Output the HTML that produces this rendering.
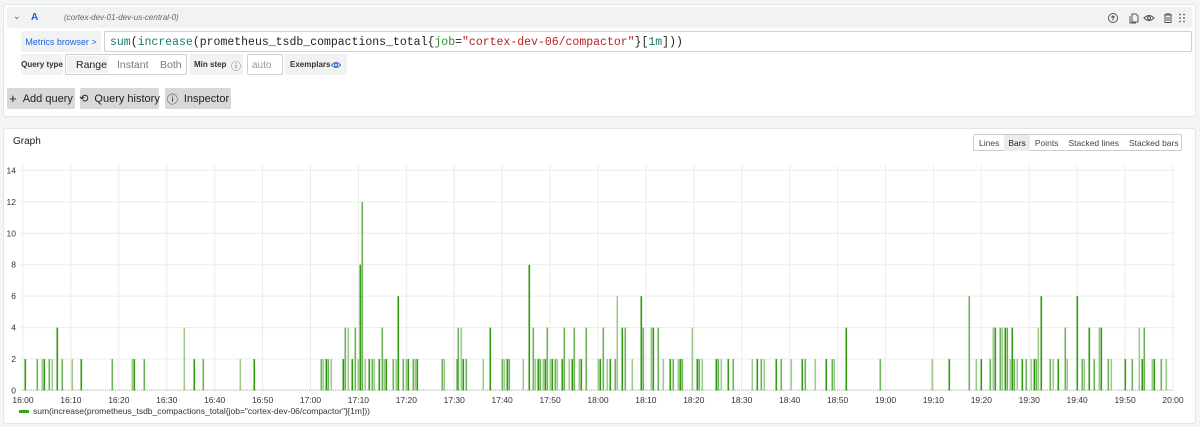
<!DOCTYPE html>
<html><head><meta charset="utf-8"><style>
*{box-sizing:border-box;margin:0;padding:0}
body{width:1200px;height:427px;background:#f4f5f5;font-family:"Liberation Sans",sans-serif;font-size:11px;color:#24292e;position:relative;overflow:hidden}
.card{position:absolute;background:#fff;border:1px solid #e4e4e4;border-radius:3px}
.abs{position:absolute;white-space:nowrap}
.hdr{position:absolute;left:7px;top:7px;width:1185px;height:21px;background:#f1f2f2;border-radius:2px}
.lbl{position:absolute;background:#f1f2f2;font-size:8px;font-weight:bold;color:#333;display:flex;align-items:center;justify-content:center;border-radius:2px;white-space:nowrap}
.btn{position:absolute;top:88px;height:21px;background:#d8d8d8;border-radius:2px;font-size:11px;color:#222;display:flex;align-items:center;justify-content:center;gap:6px;white-space:nowrap}
.mono{font-family:"Liberation Mono",monospace}
</style></head><body>
<div class="card" style="left:3px;top:4px;width:1193px;height:113px"></div>
<div class="hdr"></div>
<div class="abs" style="left:13px;top:11px;font-size:9px;color:#555">⌄</div>
<div class="abs" style="left:31px;top:12px;font-size:10px;color:#1f62e0;font-weight:bold">A</div>
<div class="abs" style="left:64px;top:13px;font-size:8px;color:#666;font-style:italic">(cortex-dev-01-dev-us-central-0)</div>
<svg class="abs" style="left:1107px;top:11px" width="90" height="14" viewBox="0 0 90 14" fill="none" stroke="#555" stroke-width="1">
<circle cx="6" cy="7" r="4.5"/><path d="M6 9.5V5M4.3 6.5L6 4.8 7.7 6.5"/>
<path d="M25 3h4l2 2v6h-6zM23 5v7h6"/>
<circle cx="42" cy="7" r="1.5"/><path d="M37 7q5-5 10 0q-5 5-10 0z"/>
<path d="M57 4h8M59 4V3h4v1M58 4.5v7h6v-7M60 6v4M62 6v4"/>
<g fill="#555" stroke="none"><circle cx="73" cy="3.5" r=".9"/><circle cx="77" cy="3.5" r=".9"/><circle cx="73" cy="7" r=".9"/><circle cx="77" cy="7" r=".9"/><circle cx="73" cy="10.5" r=".9"/><circle cx="77" cy="10.5" r=".9"/></g>
</svg>
<div class="lbl" style="left:21px;top:31px;width:80px;height:21px;color:#1f62e0;font-weight:normal;font-size:9px">Metrics browser &gt;</div>
<div class="abs mono" style="left:104px;top:31px;width:1088px;height:21px;border:1px solid #d0d0d0;border-radius:2px;padding:4px 0 0 5px;font-size:11.5px;color:#222"><span style="color:#1b7a6e">sum</span>(<span style="color:#1b7a6e">increase</span>(prometheus_tsdb_compactions_total{<span style="color:#2b8f2b">job</span>=<span style="color:#b22222">"cortex-dev-06/compactor"</span>}[<span style="color:#1b7a6e">1m</span>]))</div>
<div class="lbl" style="left:21px;top:54px;width:42px;height:21px">Query type</div>
<div class="abs" style="left:65px;top:54px;width:122px;height:21px;border:1px solid #d0d0d0;border-radius:2px"></div>
<div class="abs" style="left:67px;top:56px;width:41px;height:17px;background:#f1f2f2"></div>
<div class="abs" style="left:76px;top:59px;font-size:10.5px;color:#222">Range</div>
<div class="abs" style="left:117px;top:59px;font-size:10.5px;color:#777">Instant</div>
<div class="abs" style="left:160px;top:59px;font-size:10.5px;color:#777">Both</div>
<div class="lbl" style="left:190px;top:54px;width:53px;height:21px;justify-content:flex-start;padding-left:4px">Min step</div>
<div class="abs" style="left:231px;top:58px;font-size:10px;color:#666">ⓘ</div>
<div class="abs" style="left:247px;top:54px;width:36px;height:21px;border:1px solid #d0d0d0;border-radius:2px;padding:5px 0 0 4px;color:#999;font-size:10px">auto</div>
<div class="lbl" style="left:285px;top:54px;width:62px;height:21px;justify-content:flex-start;padding-left:5px">Exemplars</div>
<svg class="abs" style="left:331px;top:60px" width="10" height="10" viewBox="0 0 10 10" fill="none" stroke="#3d71d9" stroke-width="1"><path d="M0.5 5q4.5-5 9 0q-4.5 5-9 0z"/><circle cx="5" cy="5" r="1.5"/></svg>
<div class="btn" style="left:7px;width:68px"><span style="font-size:13px">+</span>Add query</div>
<div class="btn" style="left:80px;width:79px"><span style="font-size:11px">⟲</span>Query history</div>
<div class="btn" style="left:165px;width:66px"><span style="font-size:11px">ⓘ</span>Inspector</div>

<div class="card" style="left:3px;top:128px;width:1193px;height:296px"></div>
<div class="abs" style="left:13px;top:136px;font-size:10px;color:#222">Graph</div>
<div class="abs" style="left:973px;top:134px;width:209px;height:17px;border:1px solid #ccc;border-radius:2px;font-size:8.5px;color:#444;display:flex;align-items:center">
<span style="padding:0 5px">Lines</span><span style="padding:3px 4px;background:#ececec;color:#222">Bars</span><span style="padding:0 5px">Points</span><span style="padding:0 5px">Stacked lines</span><span style="padding:0 5px">Stacked bars</span></div>
<svg id="ch" class="abs" style="left:0;top:0" width="1200" height="427"></svg>
<div class="abs" style="left:19px;top:410px;width:10px;height:3px;background:#37a315"></div>
<div class="abs" style="left:33px;top:406px;font-size:8.5px;color:#333">sum(increase(prometheus_tsdb_compactions_total{job="cortex-dev-06/compactor"}[1m]))</div>
<script>
var s='',x0=23,x1=1173,y0=390.5,u=15.72;
for(var k=0;k<=24;k++){var x=x0+k*(x1-x0)/24;s+='<line x1="'+x+'" y1="165" x2="'+x+'" y2="391" stroke="#ececec"/>';
var h=16+Math.floor(k/6),m=(k%6)*10;s+='<text x="'+x+'" y="403" font-size="8.5" fill="#333" text-anchor="middle" font-family="Liberation Sans">'+h+':'+(m<10?'0':'')+m+'</text>';}
for(var v=0;v<=14;v+=2){var y=y0-v*u;s+='<line x1="20" y1="'+y+'" x2="1175" y2="'+y+'" stroke="#ececec"/><text x="16" y="'+(y+3)+'" font-size="8.5" fill="#333" text-anchor="end" font-family="Liberation Sans">'+v+'</text>';}
s+='<line x1="23" y1="390" x2="1173" y2="390" stroke="#9fcf8f" stroke-dasharray="1 1"/>';
var b=[[25,2],[37,2],[42,2],[44,2],[49,2],[52,2],[57,4],[62,2],[72,2],[81,2],[112,2],[132,2],[134,2],[144,2],[184,4],[194,2],[203,2],[240,2],[254,2],
[321,2],[323,2],[326,2],[328,2],[331,2],[343,2],[345,4],[348,4],[352,2],[355,4],[358,2],[360,8],[362,12],[365,2],[369,2],[372,2],[374,2],[379,2],[382,4],[384,2],[386,2],[393,2],[396,2],[398,6],[403,2],[406,2],[408,2],[413,2],[415,2],[417,2],[442,2],[444,2],[457,2],[458,4],[461,4],[463,2],[466,2],[483,2],[490,4],[502,2],[504,2],[507,2],[509,2],[523,2],[529,8],[533,4],[535,2],[538,2],[540,2],[543,2],[545,2],[547,4],[550,2],[552,2],[555,2],[557,2],[562,2],[564,4],[569,2],[572,2],[574,4],[579,2],[581,2],[586,4],[598,2],[600,2],[603,4],[607,2],[610,2],[615,2],[617,6],[622,4],[625,4],[632,2],
[641,6],[643,4],[651,4],[653,4],[658,4],[663,2],[670,2],[673,2],[678,2],[680,2],[682,2],[692,4],[697,2],[699,2],[702,2],[716,2],[718,2],[721,2],[728,2],[733,2],[752,2],[757,2],[761,2],[764,2],[776,2],[781,2],[791,2],[802,2],[805,2],[815,2],[826,2],[832,2],[834,2],[846,4],[880,2],[932,2],
[949,2],[969,6],[976,2],[981,2],[990,2],[993,4],[995,4],[1000,4],[1002,4],[1005,4],[1007,4],[1010,2],[1012,4],[1014,2],[1017,2],[1022,2],[1026,2],[1031,2],[1034,2],[1036,2],[1038,4],[1041,6],[1050,2],[1053,2],[1058,2],[1065,4],[1067,2],[1077,6],[1082,2],[1084,2],[1089,4],[1094,2],[1099,4],[1101,4],[1108,2],[1111,2],[1125,2],[1132,2],[1139,4],[1142,2],[1144,4],[1152,2],[1154,2],[1161,2],[1166,2]];
b.forEach(function(p,i){var h=p[1]*u;var c=(i%3==0)?'#2f9a0c':(i%3==1?'#6bb25a':'#9ccb8c');s+='<rect x="'+(p[0]-0.5)+'" y="'+(y0-h)+'" width="1.6" height="'+h+'" fill="'+c+'"/>';});
document.getElementById('ch').innerHTML=s;
</script>
</body></html>
